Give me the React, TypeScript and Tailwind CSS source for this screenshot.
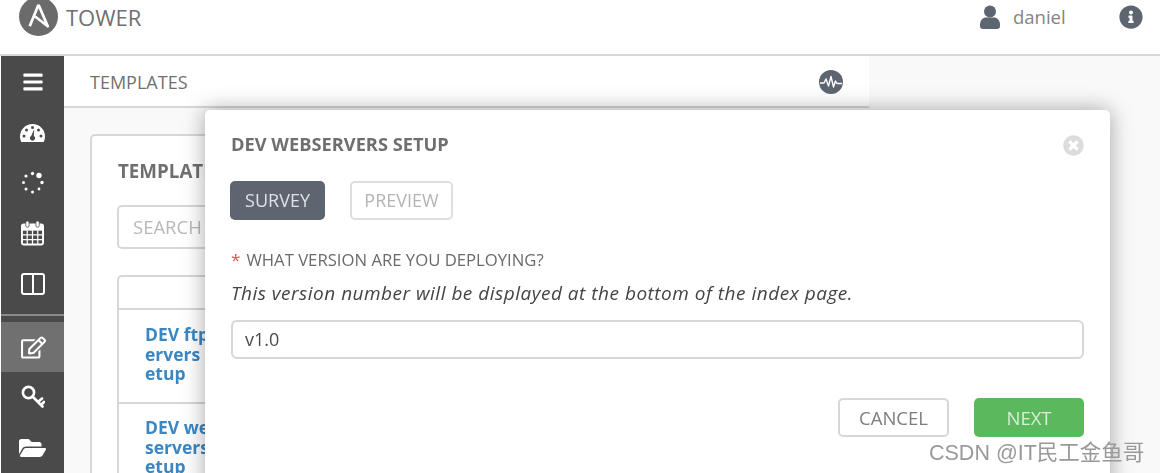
import {
  FaBars,
  FaRegEdit,
  FaFolderOpen,
  FaInfoCircle,
  FaTimesCircle,
} from "react-icons/fa";

function AnsibleLogo() {
  return (
    <svg viewBox="0 0 40 40" className="h-[39px] w-[39px]">
      <circle cx="20" cy="20" r="20" fill="#6b6b6b" />
      <path d="M20 8 L11 30 M20 8 L29.5 30 L16.5 20" fill="none" stroke="#fff" strokeWidth="2.8" strokeLinejoin="round" />
    </svg>
  );
}

function UserIcon() {
  return (
    <svg viewBox="0 0 20 24" className="h-[24px] w-[20px]">
      <circle cx="10" cy="6.5" r="6" fill="#5d6570" />
      <path d="M0 20 C0 15 3 12.5 6 12.5 H14 C17 12.5 20 15 20 20 V21 C20 22.7 19 24 17 24 H3 C1 24 0 22.7 0 21 Z" fill="#5d6570" />
    </svg>
  );
}

function GaugeIcon() {
  return (
    <svg viewBox="0 0 25 18" className="h-[18px] w-[25px]">
      <path d="M12.5 0 C5.5 0 0 5.5 0 12.5 C0 14.5 .5 16.3 1.3 18 H23.7 C24.5 16.3 25 14.5 25 12.5 C25 5.5 19.5 0 12.5 0 Z" fill="#fff" />
      <circle cx="12.5" cy="3.5" r="1.5" fill="#4a4a4a" />
      <circle cx="6.5" cy="6" r="1.5" fill="#4a4a4a" />
      <circle cx="18.5" cy="6" r="1.5" fill="#4a4a4a" />
      <circle cx="4" cy="12" r="1.5" fill="#4a4a4a" />
      <circle cx="21" cy="12" r="1.5" fill="#4a4a4a" />
      <path d="M13.8 6 L14.2 6.2 L13.8 12 A2.5 2.5 0 1 1 11.2 12 Z" fill="#4a4a4a" />
    </svg>
  );
}

function SpinnerDots() {
  const dots = [
    [11.5, 2.5, 1.7],
    [18, 4.5, 2.7],
    [21, 11.5, 1.7],
    [18, 18, 1.4],
    [11.5, 21, 1.5],
    [5, 18, 1.5],
    [2.5, 11.5, 1.5],
    [5, 5, 1.6],
  ];
  return (
    <svg viewBox="0 0 24 24" className="h-[24px] w-[24px]">
      {dots.map(([x, y, r], i) => (
        <circle key={i} cx={x} cy={y} r={r} fill="#fff" />
      ))}
    </svg>
  );
}

function CalendarIcon() {
  return (
    <svg viewBox="0 0 24 26" className="h-[26px] w-[23px]" fill="none" stroke="#fff">
      <rect x="1" y="4" width="22" height="21" rx="2" strokeWidth="2" fill="#4a4a4a" />
      <path d="M1 5 H23 V10 H1 Z" fill="#fff" strokeWidth="1" />
      <path d="M1 15 H23 M1 20 H23 M6.5 10 V25 M12 10 V25 M17.5 10 V25" strokeWidth="1.3" />
      <rect x="5" y="0.5" width="3.4" height="6.5" rx="1.5" fill="#fff" stroke="#4a4a4a" strokeWidth=".8" />
      <rect x="15.6" y="0.5" width="3.4" height="6.5" rx="1.5" fill="#fff" stroke="#4a4a4a" strokeWidth=".8" />
    </svg>
  );
}

function ColumnsIcon() {
  return (
    <svg viewBox="0 0 24 22" className="h-[22px] w-[24px]">
      <rect x="1" y="1" width="22" height="20" rx="2" fill="none" stroke="#fff" strokeWidth="2" />
      <path d="M12 2 V21" stroke="#fff" strokeWidth="2" />
    </svg>
  );
}

function KeyIcon() {
  return (
    <svg viewBox="0 0 24 24" className="h-[24px] w-[24px]" fill="none" stroke="#fff" strokeLinecap="round">
      <circle cx="7.5" cy="7.5" r="5.6" strokeWidth="2.6" />
      <path d="M11.5 11.5 L21.5 21.5 M17 17 L21 13.5 M20 20 L23 17" strokeWidth="2.6" />
    </svg>
  );
}

function PulseIcon() {
  return (
    <svg viewBox="0 0 24 24" className="h-[24px] w-[24px]">
      <circle cx="12" cy="12" r="12" fill="#5d6570" />
      <path d="M1 13 H5 L7 9 L9.5 16 L12 6.5 L14.5 17 L16.5 11 L18 13.5 H23" fill="none" stroke="#fff" strokeWidth="1.4" strokeLinejoin="round" />
    </svg>
  );
}

function SideItem({ children, active }: { children: React.ReactNode; active?: boolean }) {
  return (
    <div className={`flex h-[51px] items-center justify-center ${active ? "bg-[#707070]" : ""}`}>
      {children}
    </div>
  );
}

export default function App() {
  return (
    <div className="relative h-[473px] w-[1160px] overflow-hidden bg-white font-['Open_Sans',sans-serif]">
      <div className="blur-[0.5px]">
        {/* top bar */}
        <header className="flex h-[56px] items-start border-b-2 border-[#d7d7d7] bg-white">
          <div className="ml-[19px] -mt-[3px]">
            <AnsibleLogo />
          </div>
          <span className="ml-[8px] mt-[2px] text-[22px] leading-[30px] text-[#707070]">TOWER</span>
          <div className="ml-auto mt-[3px] flex items-center">
            <UserIcon />
            <span className="ml-[13px] w-[106px] text-[18.5px] text-[#848484]">daniel</span>
            <FaInfoCircle className="mr-[17px] h-[24px] w-[24px] text-[#5d6570]" />
          </div>
        </header>

        <div className="flex h-[417px]">
          {/* sidebar */}
          <nav className="ml-px flex w-[63px] shrink-0 flex-col bg-[#4a4a4a] pt-px text-white">
            <SideItem><FaBars className="h-[22px] w-[22px]" /></SideItem>
            <SideItem><GaugeIcon /></SideItem>
            <SideItem><SpinnerDots /></SideItem>
            <SideItem><CalendarIcon /></SideItem>
            <SideItem><ColumnsIcon /></SideItem>
            <div className="mt-[5px] mb-[6px] h-[2px] bg-[#8a8a8a]" />
            <SideItem active><FaRegEdit className="ml-[2px] h-[25px] w-[25px]" /></SideItem>
            <SideItem><KeyIcon /></SideItem>
            <SideItem><FaFolderOpen className="h-[26px] w-[27px]" /></SideItem>
          </nav>

          <main className="min-w-0 flex-1 bg-[#f9f9f9]">
            <div className="flex h-[52px] w-[805px] items-center justify-between border-b-2 border-[#d7d7d7] bg-white pl-[26px] pr-[26px] pt-[2px]">
              <span className="text-[18px] text-[#707070]">TEMPLATES</span>
              <PulseIcon />
            </div>

            {/* card behind the dialog */}
            <section className="ml-[26px] mt-[26px] h-[400px] w-[700px] rounded-[5px] border-2 border-[#d7d7d7] bg-white pl-[25px] pt-[23px]">
              <h2 className="ml-px text-[18.75px] font-bold leading-[24px] text-[#6f6f6f]">TEMPLATES</h2>
              <div className="mt-[22px] flex h-[44px] w-[300px] items-center rounded-[5px] border-2 border-[#d7d7d7] pl-[14px] text-[18.5px] text-[#b8b8b8]">
                SEARCH
              </div>
              <div className="mt-[26px] w-[300px] rounded-t-[5px] border-2 border-[#d7d7d7]">
                <div className="h-[33px] border-b-2 border-[#d7d7d7]" />
                <div className="h-[94px] border-b-2 border-[#d7d7d7] pl-[26px] pt-[15px] text-[17.5px] font-bold leading-[19.5px] text-[#3a87c4]">
                  DEV ftp<br />ervers<br />etup
                </div>
                <div className="pl-[26px] pt-[14px] text-[17.5px] font-bold leading-[19.5px] text-[#3a87c4]">
                  DEV web<br />servers<br />etup
                </div>
              </div>
            </section>
          </main>
        </div>

        {/* survey dialog */}
        <div className="absolute left-[205px] top-[110px] h-[420px] w-[905px] rounded-[5px] bg-white px-[26px] pt-[22px] shadow-[0_0_22px_rgba(0,0,0,0.35)]">
          <div className="flex items-center justify-between">
            <h1 className="text-[18.25px] font-bold leading-[24px] text-[#6f6f6f]">DEV WEBSERVERS SETUP</h1>
            <FaTimesCircle className="mt-[3px] h-[21px] w-[21px] text-[#dcdcdc]" />
          </div>
          <div className="-ml-px mt-[25px] flex gap-[25px]">
            <button className="flex h-[39px] w-[95px] items-center justify-center rounded-[5px] bg-[#5d6570] text-[18px] text-[#dfe1e4]">
              SURVEY
            </button>
            <button className="flex h-[39px] w-[103px] items-center justify-center rounded-[5px] border-2 border-[#dedede] text-[18px] text-[#b4b4b4]">
              PREVIEW
            </button>
          </div>
          <div className="mt-[28px] flex items-center text-[16.7px] leading-[24px] text-[#6a6a6a]">
            <span className="mr-[6px] text-[17px] text-[#d9534f]">*</span>
            WHAT VERSION ARE YOU DEPLOYING?
          </div>
          <p className="mt-[9px] text-[19px] italic leading-[24px] tracking-[0.5px] text-[#444]">
            This version number will be displayed at the bottom of the index page.
          </p>
          <div className="mt-[15px] flex h-[39px] items-center rounded-[6px] border-2 border-[#d7d7d7] pl-[12px] text-[18px] text-[#4a4a4a]">
            v1.0
          </div>
          <div className="mt-[39px] flex justify-end gap-[25px]">
            <button className="flex h-[39px] w-[111px] items-center justify-center rounded-[5px] border-2 border-[#d7d7d7] text-[18.5px] text-[#7d7d7d]">
              CANCEL
            </button>
            <button className="flex h-[39px] w-[110px] items-center justify-center rounded-[5px] bg-[#5cb85c] text-[18.5px] text-[#d6efd6]">
              NEXT
            </button>
          </div>
        </div>
      </div>

      <span className="absolute left-[929px] top-[441px] font-['Liberation_Sans','Noto_Sans_CJK_SC',sans-serif] text-[21.5px] leading-[24px] text-[#999]">
        CSDN @IT民工金鱼哥
      </span>
    </div>
  );
}
